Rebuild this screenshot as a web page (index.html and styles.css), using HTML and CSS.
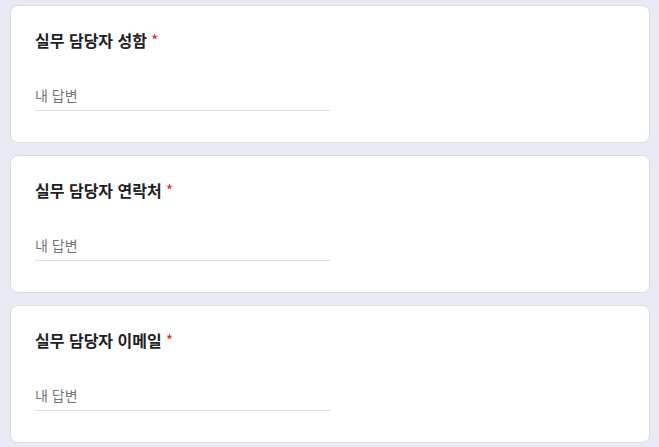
FILE: index.html
```html
<!DOCTYPE html>
<html lang="ko">
<head>
<meta charset="utf-8">
<title>Form</title>
<link rel="stylesheet" href="styles.css">
</head>
<body>
<main class="form">
  <section class="card">
    <div class="title">실무 담당자 성함<span class="req">*</span></div>
    <div class="answer">내 답변</div>
  </section>
  <section class="card">
    <div class="title">실무 담당자 연락처<span class="req">*</span></div>
    <div class="answer">내 답변</div>
  </section>
  <section class="card">
    <div class="title">실무 담당자 이메일<span class="req">*</span></div>
    <div class="answer">내 답변</div>
  </section>
</main>
</body>
</html>
```
FILE: styles.css
```css
html, body {
  margin: 0;
  padding: 0;
  background: #e8eaf6;
}
body {
  font-family: "Noto Sans CJK KR", "Noto Sans", sans-serif;
}
.form {
  display: flex;
  flex-direction: column;
  gap: 12px;
  padding: 5px 9px 0 10px;
}
.card {
  background: #fff;
  border: 1px solid #dadce0;
  border-radius: 8px;
  padding: 22px 24px 31px;
  display: flex;
  flex-direction: column;
  gap: 33px;
}
.title {
  font-size: 16px;
  line-height: 24px;
  font-weight: 700;
  color: #202124;
}
.req {
  color: #d93025;
  margin-left: 4px;
  font-weight: 400;
}
.answer {
  width: 295px;
  border-bottom: 1px solid #dadce0;
  padding-bottom: 5px;
  font-size: 14px;
  line-height: 20px;
  color: #70757a;
}
```
